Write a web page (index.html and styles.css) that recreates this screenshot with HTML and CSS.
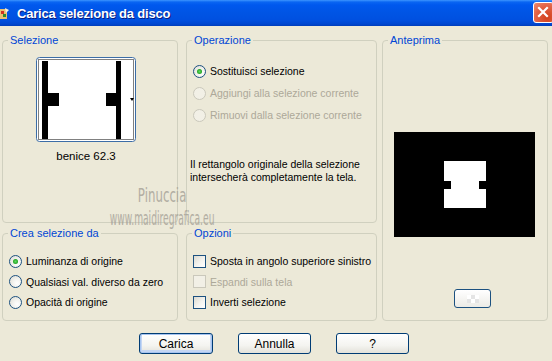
FILE: index.html
```html
<!DOCTYPE html>
<html lang="it">
<head>
  <meta charset="UTF-8">
  <title>Carica selezione da disco</title>
  <link rel="stylesheet" href="styles.css">
</head>
<body>
  <div class="window">
    <div class="titlebar">
      <div class="title">
        <svg class="app-icon" width="10" height="16" viewBox="0 0 10 16">
          <rect x="0" y="3" width="7" height="10" fill="#e8c070"/>
          <rect x="1" y="5" width="3" height="3" fill="#d03020"/>
          <rect x="3" y="8" width="3" height="3" fill="#2a8a30"/>
          <path d="M5 2 L9 4 L6 7 Z" fill="#f4f0e0"/>
        </svg>
        <span>Carica selezione da disco</span>
      </div>
      <div class="close">
        <svg width="21" height="21" viewBox="0 0 21 21">
          <path d="M6 6 L14 14 M14 6 L6 14" stroke="#fff" stroke-width="2.2" stroke-linecap="square"/>
        </svg>
      </div>
    </div>

    <div class="groups">
      <fieldset class="box col-1">
        <legend>Selezione</legend>
        <div class="thumb">
          <svg width="100" height="85" viewBox="0 0 100 85">
            <rect x="0.5" y="0.5" width="99" height="84" rx="3" fill="#fff" stroke="#3c6da6"/>
            <rect x="2.5" y="2.5" width="95" height="80" fill="none" stroke="#000" stroke-dasharray="1 1"/>
            <rect x="6" y="4" width="6" height="78" fill="#000"/>
            <rect x="12" y="36" width="11" height="13" fill="#000"/>
            <rect x="80" y="4" width="5" height="78" fill="#000"/>
            <rect x="70" y="36" width="10" height="13" fill="#000"/>
            <path d="M94 41 L98 41 L96 44 Z" fill="#000"/>
          </svg>
          <div class="thumb-name">benice 62.3</div>
        </div>
      </fieldset>

      <fieldset class="box col-2">
        <legend>Operazione</legend>
        <div class="options">
          <label class="opt"><span class="radio checked"></span>Sostituisci selezione</label>
          <label class="opt disabled"><span class="radio"></span>Aggiungi alla selezione corrente</label>
          <label class="opt disabled"><span class="radio"></span>Rimuovi dalla selezione corrente</label>
        </div>
        <p class="note">Il rettangolo originale della selezione<br>intersecherà completamente la tela.</p>
      </fieldset>

      <fieldset class="box box-prev">
        <legend>Anteprima</legend>
        <div class="preview">
          <svg width="141" height="105" viewBox="0 0 141 105">
            <rect width="141" height="105" fill="#000"/>
            <rect x="50" y="29" width="42" height="47" fill="#fff"/>
            <rect x="50" y="49" width="7" height="8" fill="#000"/>
            <rect x="85" y="49" width="7" height="8" fill="#000"/>
          </svg>
        </div>
        <div class="bg-btn"><span class="checker"></span></div>
      </fieldset>

      <fieldset class="box col-1">
        <legend>Crea selezione da</legend>
        <div class="options small">
          <label class="opt"><span class="radio checked"></span>Luminanza di origine</label>
          <label class="opt"><span class="radio"></span>Qualsiasi val. diverso da zero</label>
          <label class="opt"><span class="radio"></span>Opacità di origine</label>
        </div>
      </fieldset>

      <fieldset class="box col-2">
        <legend>Opzioni</legend>
        <div class="options small">
          <label class="opt"><span class="check"></span>Sposta in angolo superiore sinistro</label>
          <label class="opt disabled"><span class="check"></span>Espandi sulla tela</label>
          <label class="opt"><span class="check"></span>Inverti selezione</label>
        </div>
      </fieldset>
    </div>

    <div class="buttons">
      <button class="btn default">Carica</button>
      <button class="btn">Annulla</button>
      <button class="btn">?</button>
    </div>

    <div class="watermark">
      <div class="wm-name">Pinuccia</div>
      <div class="wm-site">www.maidiregrafica.eu</div>
    </div>
  </div>
</body>
</html>
```

FILE: styles.css
```css
* {
  box-sizing: border-box;
}

body {
  margin: 0;
  font-family: 'Liberation Sans', Arial, sans-serif;
  font-size: 10.5px;
  color: #000;
}

.window {
  position: relative;
  width: 552px;
  height: 361px;
  overflow: hidden;
  background: #ece9d8;
}

.titlebar {
  height: 26px;
  display: flex;
  justify-content: space-between;
  align-items: flex-start;
  background: linear-gradient(to bottom, #3d95ff 0, #0a66f2 2px, #0058ee 5px, #0055e5 12px, #0050e0 20px, #0047d0 24px, #003dbb 26px);
}

.title {
  display: flex;
  align-items: center;
  gap: 7px;
  height: 26px;
  color: #fff;
  font-family: 'Liberation Sans', Arial, sans-serif;
  font-weight: bold;
  font-size: 13px;
  letter-spacing: -0.2px;
  text-shadow: 1px 1px 0 #0a1e80;
}

.app-icon {
  margin-top: 1px;
}

.close {
  width: 21px;
  height: 21px;
  margin-top: 2px;
  margin-right: -2px;
  border: 1px solid #fff;
  border-radius: 3px;
  background: radial-gradient(circle at 70% 75%, #d2401c 0, #e26447 60%, #ed8d74 100%);
}

.close svg {
  display: block;
  margin: -1px;
}

.groups {
  display: grid;
  grid-template-columns: 184px 196px 166px;
  grid-template-rows: 190px 95px;
  row-gap: 3px;
  margin: 7px 0 0 2px;
}

.box {
  margin: 0;
  padding: 0;
  border: 1px solid #d0d0bf;
  border-radius: 4px;
  min-width: 0;
}

.box.col-1 {
  margin-right: 8px;
}

.box.col-2 {
  margin-right: 5px;
}

.box legend {
  margin-left: 5px;
  padding: 0 2px;
  font-size: 11px;
  line-height: 14px;
  color: #0046d5;
}

.box-prev {
  grid-column: 3;
  grid-row: 1 / 3;
}

.thumb {
  margin: 10px 0 0 33px;
  width: 100px;
  text-align: center;
}

.thumb svg {
  display: block;
}

.thumb-name {
  margin-top: 8px;
  font-size: 11.5px;
}

.options {
  display: flex;
  flex-direction: column;
  margin: 13px 0 0 6px;
}

.opt {
  display: flex;
  align-items: center;
  gap: 4px;
  height: 22px;
  white-space: nowrap;
}

.options.small {
  margin-top: 11px;
}

.options.small .opt {
  height: 20.5px;
}

.opt.disabled {
  color: #aca899;
}

.radio {
  width: 13px;
  height: 13px;
  border-radius: 50%;
  border: 1px solid #1c5180;
  background: radial-gradient(circle at 65% 65%, #fff 0, #f3f3ef 40%, #dcdad0 100%);
  display: flex;
  align-items: center;
  justify-content: center;
  flex-shrink: 0;
}

.radio.checked::after {
  content: "";
  width: 5px;
  height: 5px;
  border-radius: 50%;
  background: radial-gradient(circle, #5fdc5f 0, #21a121 70%);
}

.opt.disabled .radio,
.opt.disabled .check {
  border-color: #cac8bb;
  background: #f2f0e6;
}

.check {
  width: 13px;
  height: 13px;
  border: 1px solid #1c5180;
  background: linear-gradient(135deg, #dcdad0 0, #f3f3ef 55%, #fff 100%);
  flex-shrink: 0;
}

.note {
  margin: 32px 0 0 3px;
  font-size: 10.5px;
  line-height: 13px;
}

.preview {
  margin: 85px 0 0 11px;
  line-height: 0;
}

.bg-btn {
  width: 37px;
  height: 19px;
  margin: 52px 0 0 71px;
  border: 1px solid #1c5180;
  border-radius: 3px;
  background: linear-gradient(to bottom, #fff, #ecebe6);
  display: flex;
  align-items: center;
  justify-content: center;
}

.checker {
  width: 12px;
  height: 8px;
  background: conic-gradient(#e4e4e4 25%, #fff 0 50%, #e4e4e4 0 75%, #fff 0) 0 0 / 8px 8px;
}

.buttons {
  display: flex;
  gap: 25px;
  padding-left: 139px;
  margin-top: 12px;
}

.btn {
  width: 73px;
  height: 21px;
  padding: 0;
  border: 1px solid #003c74;
  border-radius: 3px;
  background: linear-gradient(to bottom, #fff 0, #f4f4f0 60%, #e3e2da 100%);
  font-family: 'Liberation Sans', Arial, sans-serif;
  font-size: 12px;
  color: #000;
}

.btn.default {
  width: 74px;
  box-shadow: inset 0 0 0 1px #a6c4f0, inset 0 -1px 0 2px #c4d6f3;
}

.watermark {
  position: absolute;
  left: 62px;
  top: 184px;
  width: 200px;
  display: flex;
  flex-direction: column;
  align-items: center;
  color: #a8a49a;
  font-family: 'DejaVu Sans', sans-serif;
  font-size: 19px;
  opacity: 0.85;
}

.wm-name {
  white-space: nowrap;
  transform: scaleX(0.62);
}

.wm-site {
  margin-top: 1px;
  white-space: nowrap;
  transform: scaleX(0.48);
}
```
